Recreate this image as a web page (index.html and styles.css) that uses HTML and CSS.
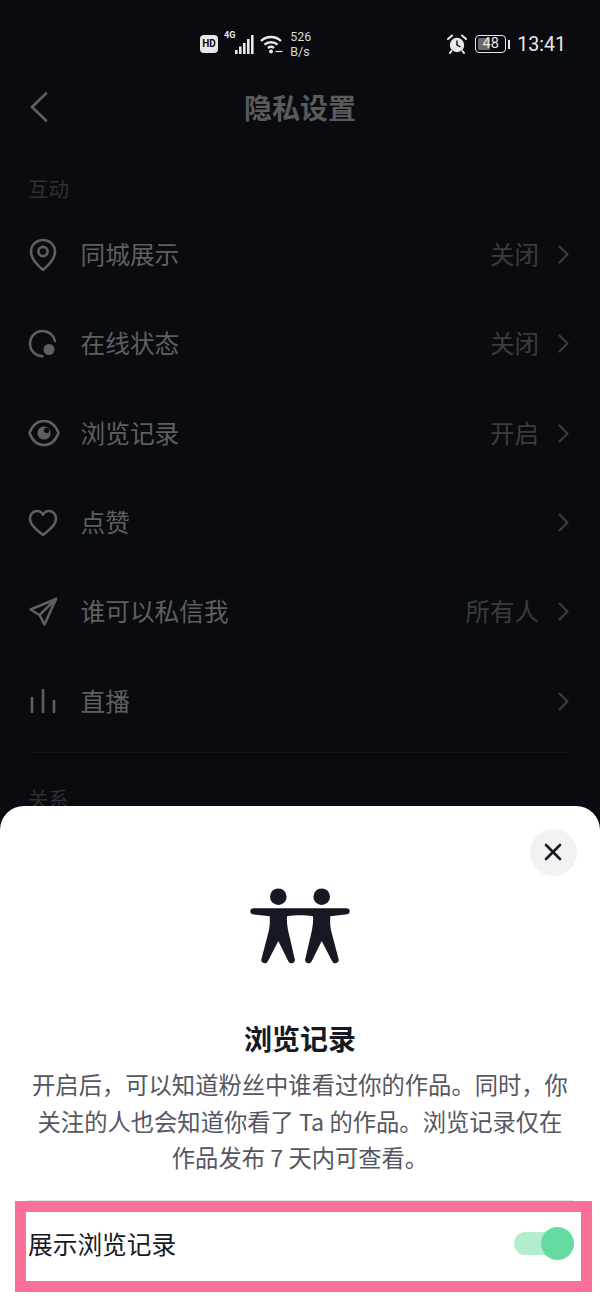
FILE: index.html
```html
<!DOCTYPE html>
<html lang="zh-CN">
<head>
    <meta charset="UTF-8">
    <meta name="viewport" content="width=device-width, initial-scale=1.0">
    <title>隐私设置</title>
    <link rel="stylesheet" href="styles.css">
</head>
<body>
    <div class="screen">
        <div class="status-bar">
            <div class="status-left">
                <span class="hd-badge">HD</span>
                <span class="net-type">4G</span>
                <svg class="signal" width="19" height="19" viewBox="0 0 19 19">
                    <rect x="0" y="15" width="2.6" height="4" />
                    <rect x="4" y="11.5" width="2.6" height="7.5" />
                    <rect x="8" y="8" width="2.6" height="11" />
                    <rect x="12" y="4" width="2.6" height="15" />
                    <rect x="16" y="0" width="2.6" height="19" />
                </svg>
                <svg class="wifi" width="23" height="19" viewBox="0 0 23 19">
                    <path d="M1 6 C6.5 0.6 15.5 0.6 21 6" />
                    <path d="M4.5 9.6 C8 6.4 14 6.4 17.5 9.6" />
                    <path d="M8 13 C9.8 11.6 12.2 11.6 14 13" />
                    <circle cx="11" cy="16.5" r="2" class="wifi-dot" />
                    <path d="M15.5 16.5 h7" class="wifi-arrow" />
                </svg>
                <span class="speed">526<br>B/s</span>
            </div>
            <div class="status-right">
                <svg class="alarm" width="20" height="20" viewBox="0 0 20 20">
                    <circle cx="10" cy="11" r="7.2" fill="#e8e8e8" />
                    <path d="M10 6.5 V11 L13.5 13" fill="none" stroke="#0a0b10" stroke-width="1.4" />
                    <path d="M1 5 L5 1.5 M19 5 L15 1.5 M4.5 17 L3 19 M15.5 17 L17 19" fill="none" stroke="#e8e8e8" stroke-width="2" stroke-linecap="round" />
                </svg>
                <div class="battery">
                    <div class="battery-body">
                        <span class="battery-fill"></span>
                        <span class="battery-num">48</span>
                    </div>
                    <span class="battery-cap"></span>
                </div>
                <span class="clock">13:41</span>
            </div>
        </div>

        <div class="nav-bar">
            <svg class="back" width="18" height="30" viewBox="0 0 18 30">
                <path d="M16 1.5 L2 15 L16 28.5" />
            </svg>
            <h1>隐私设置</h1>
        </div>

        <div class="section-title">互动</div>

        <div class="row">
            <span class="icon-box">
                <svg class="row-icon" width="30" height="34" viewBox="0 0 30 34">
                    <path d="M15 32 C9 26.5 3 21 3 13.6 C3 7 8.3 2 15 2 C21.7 2 27 7 27 13.6 C27 21 21 26.5 15 32 Z" />
                    <circle cx="15" cy="13.5" r="4.6" />
                </svg>
            </span>
            <span class="row-name">同城展示</span>
            <span class="row-value">关闭</span>
            <svg class="row-arrow" width="11" height="19" viewBox="0 0 11 19"><path d="M1.5 1.5 L9.5 9.5 L1.5 17.5" /></svg>
        </div>
        <div class="row">
            <span class="icon-box">
                <svg class="row-icon" width="30" height="30" viewBox="0 0 30 30">
                    <path d="M27 12 C25.6 6.2 20.6 2 14.6 2 C7.6 2 2 7.6 2 14.6 C2 21.6 7.6 27.2 14.6 27.2" />
                    <circle cx="21" cy="20.5" r="5.5" class="icon-fill" />
                </svg>
            </span>
            <span class="row-name">在线状态</span>
            <span class="row-value">关闭</span>
            <svg class="row-arrow" width="11" height="19" viewBox="0 0 11 19"><path d="M1.5 1.5 L9.5 9.5 L1.5 17.5" /></svg>
        </div>
        <div class="row">
            <span class="icon-box">
                <svg class="row-icon" width="32" height="28" viewBox="0 0 32 28">
                    <path d="M1.5 14 C4.5 6 9.5 2 16 2 C22.5 2 27.5 6 30.5 14 C27.5 22 22.5 26 16 26 C9.5 26 4.5 22 1.5 14 Z" />
                    <circle cx="16" cy="14" r="6.6" class="icon-fill" />
                    <circle cx="18.6" cy="11.4" r="2.6" class="icon-cut" />
                </svg>
            </span>
            <span class="row-name">浏览记录</span>
            <span class="row-value">开启</span>
            <svg class="row-arrow" width="11" height="19" viewBox="0 0 11 19"><path d="M1.5 1.5 L9.5 9.5 L1.5 17.5" /></svg>
        </div>
        <div class="row">
            <span class="icon-box">
                <svg class="row-icon" width="30" height="28" viewBox="0 0 30 28">
                    <path d="M15 26 C8 20.5 2 15.5 2 9.4 C2 5 5.2 2 9 2 C11.5 2 13.8 3.3 15 5.6 C16.2 3.3 18.5 2 21 2 C24.8 2 28 5 28 9.4 C28 15.5 22 20.5 15 26 Z" />
                </svg>
            </span>
            <span class="row-name">点赞</span>
            <svg class="row-arrow" width="11" height="19" viewBox="0 0 11 19"><path d="M1.5 1.5 L9.5 9.5 L1.5 17.5" /></svg>
        </div>
        <div class="row">
            <span class="icon-box">
                <svg class="row-icon" width="30" height="30" viewBox="0 0 30 30">
                    <path d="M28 2 L2.5 12.5 L11.5 18 L16.5 27.5 Z" />
                    <path d="M28 2 L11.5 18" />
                </svg>
            </span>
            <span class="row-name">谁可以私信我</span>
            <span class="row-value">所有人</span>
            <svg class="row-arrow" width="11" height="19" viewBox="0 0 11 19"><path d="M1.5 1.5 L9.5 9.5 L1.5 17.5" /></svg>
        </div>
        <div class="row">
            <span class="icon-box">
                <svg class="row-icon" width="30" height="26" viewBox="0 0 30 26">
                    <path d="M4 10 V24 M15 2 V24 M26 13 V24" />
                </svg>
            </span>
            <span class="row-name">直播</span>
            <svg class="row-arrow" width="11" height="19" viewBox="0 0 11 19"><path d="M1.5 1.5 L9.5 9.5 L1.5 17.5" /></svg>
        </div>

        <div class="list-divider"></div>
        <div class="section-title section-next">关系</div>

        <!-- bottom sheet over the list -->
        <div class="sheet">
            <div class="sheet-top">
                <button class="close-btn" type="button">
                    <svg width="18" height="18" viewBox="0 0 18 18"><path d="M2 2 L16 16 M16 2 L2 16" /></svg>
                </button>
            </div>
            <svg class="people" width="100" height="76" viewBox="0 0 100 76">
                <circle cx="28.3" cy="8.7" r="8.3" />
                <circle cx="71.7" cy="8.7" r="8.3" />
                <path d="M3 20.3 H97 A3 3 0 0 1 97.5 26.2 L80.3 28.3 C79.8 36 80.5 41 82 46 L88.4 70.5 A3.4 3.4 0 0 1 82 73 L71.7 53 L61.8 73 A3.4 3.4 0 0 1 55.4 70.5 L60.6 48 C62.4 41 63.4 35 63 28.2 C55 26.8 45 26.8 37 28.2 C36.6 35 37.6 41 39.4 48 L44.6 70.5 A3.4 3.4 0 0 1 38.2 73 L28.3 53 L18 73 A3.4 3.4 0 0 1 11.6 70.5 L18 46 C19.5 41 20.2 36 19.7 28.3 L2.5 26.2 A3 3 0 0 1 3 20.3 Z" />
            </svg>
            <h2>浏览记录</h2>
            <p class="sheet-desc">开启后，可以知道粉丝中谁看过你的作品。同时，你关注的人也会知道你看了 Ta 的作品。浏览记录仅在作品发布 7 天内可查看。</p>
            <div class="sheet-divider"></div>
            <div class="switch-row">
                <span>展示浏览记录</span>
                <div class="switch">
                    <span class="switch-knob"></span>
                </div>
            </div>
        </div>
    </div>
</body>
</html>
```

FILE: styles.css
```css
* {
    box-sizing: border-box;
}

body {
    margin: 0;
    background-color: #0a0b10;
    font-family: "Noto Sans CJK SC", "Noto Sans", sans-serif;
}

.screen {
    position: relative;
    width: 600px;
    height: 1300px;
    overflow: hidden;
    background-color: #0a0b10;
}

/* status bar */
.status-bar {
    display: flex;
    justify-content: space-between;
    align-items: center;
    height: 72px;
    padding: 16px 34px 0 200px;
    color: #e8e8e8;
    font-family: Roboto, sans-serif;
}

.status-left,
.status-right {
    display: flex;
    align-items: center;
}

.hd-badge {
    width: 18px;
    height: 18px;
    border-radius: 4px;
    background-color: #e8e8e8;
    color: #0a0b10;
    font-size: 10px;
    font-weight: 700;
    line-height: 18px;
    text-align: center;
}

.net-type {
    align-self: flex-start;
    margin: 1px 0 0 6px;
    font-size: 9px;
    font-weight: 700;
    line-height: 10px;
}

.signal {
    fill: #e8e8e8;
}

.wifi {
    margin-left: 6px;
    fill: none;
    stroke: #e8e8e8;
    stroke-width: 2.4;
}

.wifi-dot {
    fill: #e8e8e8;
    stroke: none;
}

.wifi-arrow {
    stroke-width: 1.2;
}

.speed {
    margin-left: 7px;
    font-size: 12.5px;
    line-height: 15px;
    color: #d8d8d8;
}

.battery {
    display: flex;
    align-items: center;
    margin-left: 8px;
}

.battery-body {
    position: relative;
    width: 31px;
    height: 18px;
    padding: 2px;
    border: 1.5px solid #e8e8e8;
    border-radius: 4px;
}

.battery-fill {
    display: block;
    width: 47%;
    height: 100%;
    background-color: #6a6a6c;
    border-radius: 1px;
}

.battery-num {
    position: absolute;
    inset: 0;
    font-size: 14.5px;
    line-height: 15px;
    text-align: center;
}

.battery-cap {
    width: 2px;
    height: 9px;
    margin-left: 2px;
    background-color: #e8e8e8;
}

.clock {
    margin-left: 7px;
    font-size: 19.6px;
}

/* nav */
.nav-bar {
    position: relative;
    display: flex;
    align-items: center;
    justify-content: center;
    height: 72px;
}

.back {
    position: absolute;
    left: 30px;
    top: 20px;
    fill: none;
    stroke: #5e5f62;
    stroke-width: 2.6;
    stroke-linecap: round;
    stroke-linejoin: round;
}

h1 {
    margin: 0;
    padding-bottom: 2px;
    color: #5a5a5c;
    font-size: 28px;
    font-weight: 700;
}

.section-title {
    height: 66px;
    padding: 29px 0 0 28px;
    color: #2e2f33;
    font-size: 20.5px;
    line-height: 30px;
}

.section-next {
    height: auto;
    padding-top: 30px;
}

/* list rows */
.row {
    display: flex;
    align-items: center;
    height: 89.33px;
    padding: 0 31px 0 28px;
}

.icon-box {
    flex: none;
    display: flex;
    width: 52.5px;
}

.row-icon {
    fill: none;
    stroke: #5e5f62;
    stroke-width: 2.6;
    stroke-linecap: round;
    stroke-linejoin: round;
}

.icon-fill {
    fill: #5e5f62;
    stroke: none;
}

.icon-cut {
    fill: #0a0b10;
    stroke: none;
}

.row-name {
    padding-bottom: 3px;
    color: #5e5f62;
    font-size: 24.7px;
}

.row-value {
    margin-left: auto;
    padding-bottom: 2px;
    color: #3a3b3e;
    font-size: 24.5px;
}

.row-arrow {
    flex: none;
    margin-left: 19px;
    fill: none;
    stroke: #3a3b3e;
    stroke-width: 2.2;
    stroke-linecap: round;
    stroke-linejoin: round;
}

.row-name + .row-arrow {
    margin-left: auto;
}

.list-divider {
    height: 1px;
    margin: 6px 28px 0;
    background-color: #14151a;
}

/* bottom sheet */
.sheet {
    position: absolute;
    left: 0;
    right: 0;
    bottom: 0;
    height: 494px;
    display: flex;
    flex-direction: column;
    align-items: center;
    background-color: #fff;
    border-radius: 24px 24px 0 0;
}

.sheet-top {
    display: flex;
    justify-content: flex-end;
    width: 100%;
    padding: 23px 23px 0 0;
}

.close-btn {
    display: flex;
    align-items: center;
    justify-content: center;
    width: 47px;
    height: 47px;
    padding: 0 1px 1px 0;
    border: none;
    border-radius: 50%;
    background-color: #f2f2f3;
}

.close-btn svg {
    fill: none;
    stroke: #161823;
    stroke-width: 2.6;
    stroke-linecap: round;
}

.people {
    margin-top: 12px;
    fill: #161823;
}

h2 {
    margin: 54px 0 0;
    color: #161823;
    font-size: 28px;
    font-weight: 700;
    line-height: 40px;
}

.sheet-desc {
    width: 540px;
    margin: 8px 0 0;
    color: #55565f;
    font-size: 23.3px;
    line-height: 36.6px;
    text-align: center;
}

.sheet-divider {
    flex: none;
    width: 547px;
    height: 1px;
    margin-top: 24px;
    background-color: #e3e3e4;
}

/* the framed switch row at the bottom */
.switch-row {
    display: flex;
    align-items: center;
    justify-content: space-between;
    width: 577px;
    height: 91px;
    margin: 0 8px 0 15px;
    padding: 0 7px 6px 2px;
    border: 11px solid #fb7096;
    color: #161823;
    font-size: 24.7px;
}

.switch {
    position: relative;
    width: 60px;
    height: 23px;
    border-radius: 12px;
    background-color: #b3edcf;
}

.switch-knob {
    position: absolute;
    right: 0;
    top: -5px;
    width: 33px;
    height: 33px;
    border-radius: 50%;
    background-color: #66dba0;
}
```
